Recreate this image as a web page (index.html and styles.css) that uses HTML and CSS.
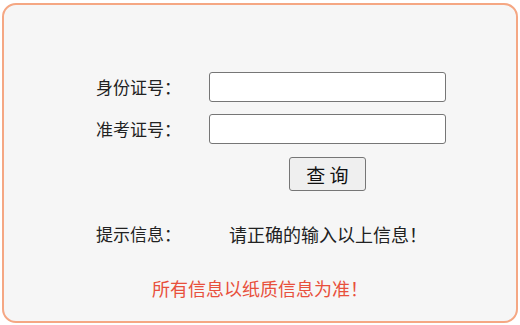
FILE: index.html
```html
<!DOCTYPE html>
<html lang="zh-CN">
<head>
<meta charset="utf-8">
<link rel="stylesheet" href="styles.css">
</head>
<body>
<div class="box">
  <div class="form">
    <label class="label">身份证号：</label>
    <input class="field" type="text">
    <label class="label">准考证号：</label>
    <input class="field" type="text">
    <div class="btn-cell"><button class="btn">查 询</button></div>
    <div class="label hint-label">提示信息：</div>
    <div class="hint">请正确的输入以上信息！</div>
  </div>
  <p class="note">所有信息以纸质信息为准！</p>
</div>
</body>
</html>
```
FILE: styles.css
```css
html, body {
  margin: 0;
  padding: 0;
  background: #ffffff;
}
body {
  font-family: "Noto Sans CJK SC", "Noto Sans", sans-serif;
  color: #222;
}
.box {
  margin: 3px 0 0 2px;
  width: 512px;
  height: 316px;
  border: 2px solid #f5a783;
  border-radius: 14px;
  background: #f6f6f6;
  padding-top: 67px;
  box-sizing: content-box;
  height: 249px;
}
.form {
  margin-left: 92px;
  display: grid;
  grid-template-columns: 113px 237px;
  row-gap: 12px;
  align-items: center;
}
.label {
  font-size: 17px;
  line-height: 30px;
  color: #222;
}
.field {
  box-sizing: border-box;
  width: 237px;
  height: 30px;
  margin: 0;
  border: 1px solid #767676;
  border-radius: 3px;
  background: #fff;
}
.btn-cell {
  grid-column: 2;
  display: flex;
  justify-content: center;
  margin-top: 1px;
}
.btn {
  box-sizing: border-box;
  width: 77px;
  height: 34px;
  margin: 0;
  padding: 0;
  border: 1px solid #767676;
  border-radius: 3px;
  background: #efefef;
  font-family: "Noto Sans CJK SC", sans-serif;
  font-size: 19px;
  color: #111;
}
.hint-label {
  margin-top: 19px;
  line-height: 24px;
}
.hint {
  margin-top: 19px;
  padding-left: 20px;
  font-size: 18px;
  line-height: 24px;
  color: #222;
  white-space: nowrap;
}
.note {
  margin: 30px 0 0;
  text-align: center;
  font-size: 18px;
  line-height: 24px;
  color: #e8503c;
}
```
